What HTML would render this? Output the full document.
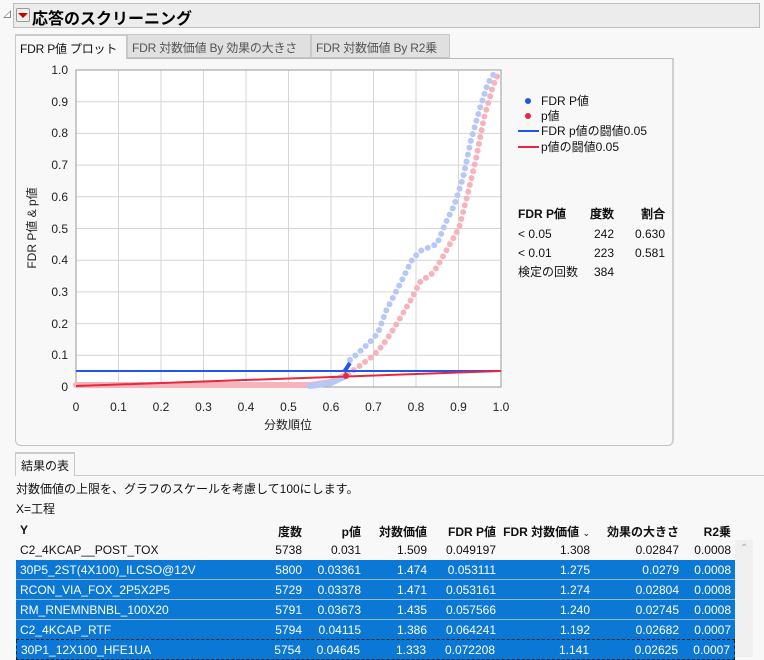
<!DOCTYPE html>
<html><head><meta charset="utf-8">
<style>
*{margin:0;padding:0;box-sizing:border-box}
body{width:764px;height:657px;background:#f8f8f8;font-family:"Liberation Sans","Noto Sans CJK JP",sans-serif;font-size:12px;color:#111;position:relative;overflow:hidden}
.a{position:absolute;white-space:nowrap}
.hdr{left:13px;top:3px;width:747px;height:25px;background:#ececec;border:1px solid #bdbdbd}
.tab{top:34px;height:24px;border:1px solid #c8c8c8;background:#e0e0e0;font-size:12px;color:#555;padding:4px 4px;letter-spacing:-0.2px}
.row{left:16px;width:719px;height:20px;font-size:12px}
.row span{position:absolute;top:3px;text-align:right}
.sel{background:#0a78d4;color:#fff;border-bottom:1px solid #9bb}
</style></head><body>
<div class="a" style="left:3px;top:10px;width:0;height:0;border-left:8px solid transparent;border-bottom:8px solid #888"></div>
<div class="a" style="left:5px;top:12px;width:0;height:0;border-left:5px solid transparent;border-bottom:5px solid #fff"></div>
<div class="a hdr"></div>
<div class="a" style="left:16px;top:8px;width:14px;height:14px;border:1px solid #999;border-radius:2px;background:#f0f0f0"></div>
<div class="a" style="left:18px;top:13px;width:0;height:0;border-left:5px solid transparent;border-right:5px solid transparent;border-top:5px solid #c00"></div>
<div class="a" style="left:32px;top:5px;font-size:16px;font-weight:bold;color:#000">応答のスクリーニング</div>

<div class="a" style="left:15px;top:58px;width:659px;height:388px;border:1px solid #c4c4c4;border-top-color:#bbb;border-right:2px solid #d0d0d0;border-radius:0 0 6px 6px;background:#f8f8f8"></div>
<div class="a tab" style="left:15px;width:112px;background:#f8f8f8;border-bottom:none;height:25px;color:#111;border-top:2px solid #ccc">FDR P値 プロット</div>
<div class="a tab" style="left:127px;width:184px">FDR 対数価値 By 効果の大きさ</div>
<div class="a tab" style="left:311px;width:139px">FDR 対数価値 By R2乗</div>

<svg class="a" style="left:0;top:0" width="764" height="450" font-family="Liberation Sans, sans-serif" font-size="12">
<rect x="76" y="70" width="425" height="317" fill="#fff"/>
<g stroke="#d6d6d6" stroke-width="1">
<line x1="118.5" y1="70" x2="118.5" y2="387"/><line x1="161" y1="70" x2="161" y2="387"/><line x1="203.5" y1="70" x2="203.5" y2="387"/><line x1="246" y1="70" x2="246" y2="387"/><line x1="288.5" y1="70" x2="288.5" y2="387"/><line x1="331" y1="70" x2="331" y2="387"/><line x1="373.5" y1="70" x2="373.5" y2="387"/><line x1="416" y1="70" x2="416" y2="387"/><line x1="458.5" y1="70" x2="458.5" y2="387"/>
<line x1="76" y1="101.7" x2="501" y2="101.7"/><line x1="76" y1="133.4" x2="501" y2="133.4"/><line x1="76" y1="165.1" x2="501" y2="165.1"/><line x1="76" y1="196.8" x2="501" y2="196.8"/><line x1="76" y1="228.5" x2="501" y2="228.5"/><line x1="76" y1="260.2" x2="501" y2="260.2"/><line x1="76" y1="291.9" x2="501" y2="291.9"/><line x1="76" y1="323.6" x2="501" y2="323.6"/><line x1="76" y1="355.3" x2="501" y2="355.3"/>
</g>
<rect x="76" y="70" width="425" height="317" fill="none" stroke="#999"/>
<g fill="#222" text-anchor="end">
<text x="68" y="74">1.0</text><text x="68" y="106">0.9</text><text x="68" y="137">0.8</text><text x="68" y="169">0.7</text><text x="68" y="201">0.6</text><text x="68" y="233">0.5</text><text x="68" y="264">0.4</text><text x="68" y="296">0.3</text><text x="68" y="328">0.2</text><text x="68" y="359">0.1</text><text x="68" y="391">0</text>
</g>
<g fill="#222" text-anchor="middle">
<text x="76" y="411">0</text><text x="118.5" y="411">0.1</text><text x="161" y="411">0.2</text><text x="203.5" y="411">0.3</text><text x="246" y="411">0.4</text><text x="288.5" y="411">0.5</text><text x="331" y="411">0.6</text><text x="373.5" y="411">0.7</text><text x="416" y="411">0.8</text><text x="458.5" y="411">0.9</text><text x="501" y="411">1.0</text>
<text x="288" y="429">分数順位</text>
</g>
<text transform="translate(36,228) rotate(-90)" text-anchor="middle" fill="#222">FDR P値 &amp; p値</text>
<polyline points="76,385 310,385 331,382 348,374" fill="none" stroke="#f7b3bb" stroke-width="6" stroke-linecap="round"/>
<polyline points="348,374 361,365 374,355 382,346 391,333 399,320 412,298 420,282 433,273 441,260 450,244 459,228 467,197 476,159 484,118 493,86 499,72" fill="none" stroke="#f7b3bb" stroke-width="6" stroke-linecap="round" stroke-dasharray="0 7"/>
<polyline points="310,386 331,383 344,377" fill="none" stroke="#b5c8f7" stroke-width="6" stroke-linecap="round"/>
<polyline points="350,360 356,355 369,343 378,333 386,311 399,286 412,260 420,251 437,244 446,222 454,206 463,178 471,140 480,108 488,83 495,72" fill="none" stroke="#b5c8f7" stroke-width="6" stroke-linecap="round" stroke-dasharray="0 7"/>
<line x1="76" y1="371" x2="501" y2="371" stroke="#2255ee" stroke-width="2"/>
<line x1="76" y1="386" x2="501" y2="371" stroke="#e8283c" stroke-width="2"/>
<polyline points="344,372 348,366 350,363" stroke="#2255ee" stroke-width="4" fill="none"/>
<circle cx="346" cy="376" r="3" fill="#e8283c"/>
<circle cx="528" cy="101" r="3" fill="#2255ee"/><text x="541" y="105" fill="#111">FDR P値</text>
<circle cx="528" cy="116" r="3" fill="#e8283c"/><text x="541" y="120" fill="#111">p値</text>
<line x1="518" y1="131" x2="539" y2="131" stroke="#2255ee" stroke-width="2"/><text x="541" y="135" fill="#111">FDR p値の闘値0.05</text>
<line x1="518" y1="147" x2="539" y2="147" stroke="#e8283c" stroke-width="2"/><text x="541" y="151" fill="#111">p値の闘値0.05</text>
<g fill="#111">
<text x="518" y="218" font-weight="bold">FDR P値</text><text x="590" y="218" font-weight="bold">度数</text><text x="665" y="218" font-weight="bold" text-anchor="end">割合</text>
<text x="518" y="238">&lt; 0.05</text><text x="594" y="238">242</text><text x="665" y="238" text-anchor="end">0.630</text>
<text x="518" y="257">&lt; 0.01</text><text x="594" y="257">223</text><text x="665" y="257" text-anchor="end">0.581</text>
<text x="518" y="276">検定の回数</text><text x="594" y="276">384</text>
</g>
</svg>

<div class="a" style="left:15px;top:475px;width:749px;height:1px;background:#c8c8c8"></div>
<div class="a" style="left:15px;top:452px;width:60px;height:24px;border:1px solid #c8c8c8;border-bottom:none;background:#f8f8f8;padding:3px 5px;border-top:2px solid #ccc">結果の表</div>
<div class="a" style="left:16px;top:480px">対数価値の上限を、グラフのスケールを考慮して100にします。</div>
<div class="a" style="left:16px;top:500px">X=工程</div>
<div class="a row" style="top:520px;font-weight:bold"><span style="left:4px;text-align:left">Y</span><span style="right:433px">度数</span><span style="right:374px">p値</span><span style="right:308px">対数価値</span><span style="right:239px">FDR P値</span><span style="right:145px">FDR 対数価値 <span style="position:static;font-weight:normal;font-size:9px">⌄</span></span><span style="right:56px">効果の大きさ</span><span style="right:4px">R2乗</span></div>
<div class="a" style="left:735px;top:540px;width:18px;height:117px;background:#f0f0f0"></div>
<div class="a" style="left:740px;top:543px;font-size:10px;color:#aaa">⌃</div>

<div class="a row" style="top:540px"><span style="left:4px;text-align:left">C2_4KCAP__POST_TOX</span><span style="right:433px">5738</span><span style="right:374px">0.031</span><span style="right:308px">1.509</span><span style="right:239px">0.049197</span><span style="right:145px">1.308</span><span style="right:56px">0.02847</span><span style="right:4px">0.0008</span></div>
<div class="a row sel" style="top:560px"><span style="left:4px;text-align:left">30P5_2ST(4X100)_ILCSO@12V</span><span style="right:433px">5800</span><span style="right:374px">0.03361</span><span style="right:308px">1.474</span><span style="right:239px">0.053111</span><span style="right:145px">1.275</span><span style="right:56px">0.0279</span><span style="right:4px">0.0008</span></div>
<div class="a row sel" style="top:580px"><span style="left:4px;text-align:left">RCON_VIA_FOX_2P5X2P5</span><span style="right:433px">5729</span><span style="right:374px">0.03378</span><span style="right:308px">1.471</span><span style="right:239px">0.053161</span><span style="right:145px">1.274</span><span style="right:56px">0.02804</span><span style="right:4px">0.0008</span></div>
<div class="a row sel" style="top:600px"><span style="left:4px;text-align:left">RM_RNEMNBNBL_100X20</span><span style="right:433px">5791</span><span style="right:374px">0.03673</span><span style="right:308px">1.435</span><span style="right:239px">0.057566</span><span style="right:145px">1.240</span><span style="right:56px">0.02745</span><span style="right:4px">0.0008</span></div>
<div class="a row sel" style="top:620px;border-bottom:1px dashed #222"><span style="left:4px;text-align:left">C2_4KCAP_RTF</span><span style="right:433px">5794</span><span style="right:374px">0.04115</span><span style="right:308px">1.386</span><span style="right:239px">0.064241</span><span style="right:145px">1.192</span><span style="right:56px">0.02682</span><span style="right:4px">0.0007</span></div>
<div class="a row sel" style="top:640px;border:1px dashed #222;border-top:none"><span style="left:4px;text-align:left">30P1_12X100_HFE1UA</span><span style="right:433px">5754</span><span style="right:374px">0.04645</span><span style="right:308px">1.333</span><span style="right:239px">0.072208</span><span style="right:145px">1.141</span><span style="right:56px">0.02625</span><span style="right:4px">0.0007</span></div>
</body></html>
